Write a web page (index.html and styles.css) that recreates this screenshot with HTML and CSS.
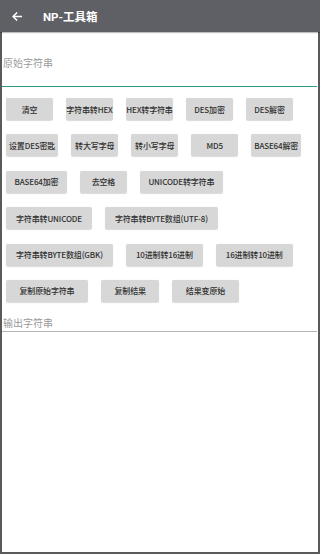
FILE: index.html
```html
<!DOCTYPE html>
<html lang="zh">
<head>
<meta charset="utf-8">
<link rel="stylesheet" href="styles.css">
</head>
<body>
<div class="screen">
  <header class="appbar">
    <svg class="back" width="10" height="9" viewBox="0 0 10 9">
      <path d="M9.5 4.5H1.2M4.6 1 1.1 4.5 4.6 8" fill="none" stroke="#fff" stroke-width="1.5" stroke-linecap="square"/>
    </svg>
    <span class="title">NP-工具箱</span>
  </header>
  <main class="content">
    <div class="field field-input"><span class="hint">原始字符串</span></div>
    <div class="buttons">
      <div class="row snug">
        <span class="btn">清空</span>
        <span class="btn">字符串转HEX</span>
        <span class="btn">HEX转字符串</span>
        <span class="btn">DES加密</span>
        <span class="btn">DES解密</span>
      </div>
      <div class="row tight">
        <span class="btn">设置DES密匙</span>
        <span class="btn">转大写字母</span>
        <span class="btn">转小写字母</span>
        <span class="btn">MD5</span>
        <span class="btn">BASE64解密</span>
      </div>
      <div class="row mid">
        <span class="btn">BASE64加密</span>
        <span class="btn">去空格</span>
        <span class="btn">UNICODE转字符串</span>
      </div>
      <div class="row loose">
        <span class="btn">字符串转UNICODE</span>
        <span class="btn">字符串转BYTE数组(UTF-8)</span>
      </div>
      <div class="row loose">
        <span class="btn">字符串转BYTE数组(GBK)</span>
        <span class="btn">10进制转16进制</span>
        <span class="btn">16进制转10进制</span>
      </div>
      <div class="row wide">
        <span class="btn">复制原始字符串</span>
        <span class="btn">复制结果</span>
        <span class="btn">结果变原始</span>
      </div>
    </div>
    <div class="field field-output"><span class="hint">输出字符串</span></div>
  </main>
</div>
</body>
</html>
```
FILE: styles.css
```css
html, body {
  margin: 0;
  padding: 0;
  background: #ffffff;
}

.screen {
  width: 320px;
  height: 554px;
  display: flex;
  flex-direction: column;
  font-family: "Roboto", "Noto Sans CJK SC", sans-serif;
  overflow: hidden;
}

.appbar {
  height: 32px;
  flex: none;
  background: #5f6065;
  display: flex;
  align-items: center;
  box-shadow: 0 1px 1px rgba(0, 0, 0, 0.25);
  position: relative;
  z-index: 1;
}

.back {
  margin-left: 12px;
  display: block;
}

.title {
  margin-left: 21px;
  color: #ffffff;
  font-size: 11.5px;
  font-weight: 700;
}

.content {
  flex: 1;
  border: 2px solid #5a5a5a;
  border-top: none;
  display: flex;
  flex-direction: column;
}

.field {
  display: flex;
  align-items: flex-end;
  margin: 0 1px 0 0;
  box-sizing: border-box;
}

.field-input {
  height: 55px;
  border-bottom: 1.5px solid #2a9a8a;
  padding-bottom: 17px;
}

.field-output {
  height: 30px;
  border-bottom: 1.5px solid #b4b4b4;
  padding-bottom: 2px;
}

.hint {
  font-family: "Noto Sans CJK SC", sans-serif;
  font-size: 10px;
  color: #9a9a9a;
  line-height: 12px;
  padding-left: 1px;
}

.buttons {
  display: flex;
  flex-direction: column;
  gap: 14.4px;
  padding: 11px 0 0 4px;
}

.row {
  display: flex;
  gap: 13px;
}

.btn {
  height: 22px;
  min-width: 47px;
  box-sizing: border-box;
  display: flex;
  align-items: center;
  justify-content: center;
  background: #d7d7d7;
  border-radius: 2px;
  box-shadow: 0 0.5px 1px rgba(0, 0, 0, 0.15);
  color: #303030;
  font-family: "Noto Sans CJK SC", sans-serif;
  font-size: 8px;
  letter-spacing: -0.15px;
  font-weight: 500;
  white-space: nowrap;
}

.snug .btn {
  padding: 0;
}

.tight .btn {
  padding: 0 3px;
}

.mid .btn {
  padding: 0 8.5px;
}

.loose .btn {
  padding: 0 10px;
}

.wide .btn {
  padding: 0 13.5px;
}
```
